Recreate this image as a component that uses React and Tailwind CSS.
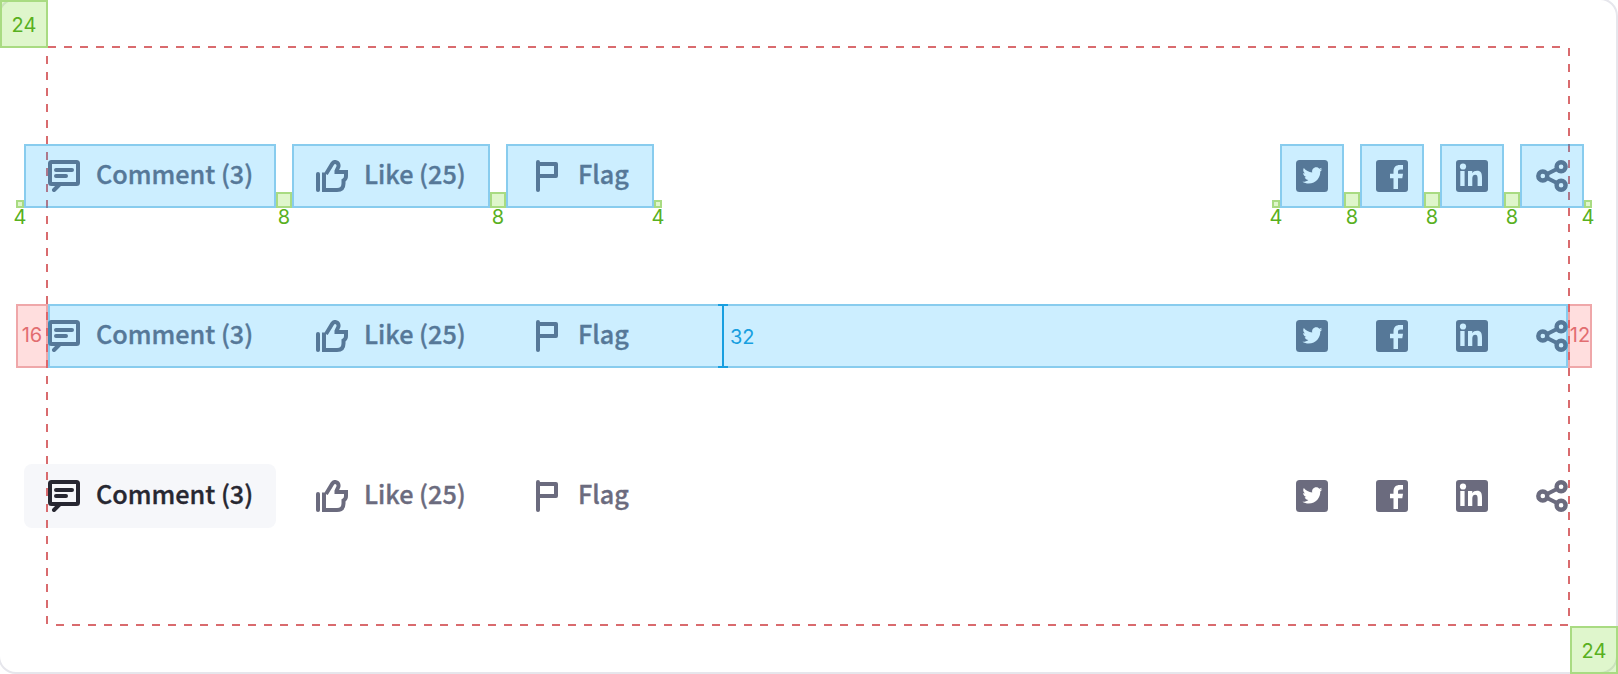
import React from "react";

const label = "self-start font-['Noto_Sans_CJK_JP','Noto_Sans',sans-serif] text-[25.2px] leading-[58px] font-medium whitespace-nowrap [-webkit-text-stroke:0.35px_currentColor]";

function CommentIcon() {
  return (
    <svg className="size-8 shrink-0" viewBox="0 0 32 32" fill="none" stroke="currentColor" strokeWidth="4" strokeLinecap="round" strokeLinejoin="round">
      <rect x="2" y="2" width="28" height="22" rx="1.5" />
      <path d="M8 10H24M8 16H18" />
      <path d="M11 25L6 30" />
    </svg>
  );
}

function LikeIcon() {
  return (
    <svg className="size-8 shrink-0" viewBox="0 0 32 32" fill="none" stroke="currentColor" strokeWidth="4" strokeLinecap="round" strokeLinejoin="round">
      <path d="M2 14V30" />
      <path strokeLinecap="butt" strokeLinejoin="miter" d="M8 12.5V30H21Q27.500 30 27.500 23.500V20.500Q30 19 30 16V12H20.500V11L22.500 6.500C23 2.200 18.500.500 16.300 3.700L10 14" />
    </svg>
  );
}

function FlagIcon() {
  return (
    <svg className="size-8 shrink-0" viewBox="0 0 32 32" fill="none" stroke="currentColor" strokeWidth="4" strokeLinecap="round" strokeLinejoin="round">
      <path d="M8 2V30M8 4H26V16H8" />
    </svg>
  );
}

function TwitterIcon() {
  return (
    <svg className="size-8 shrink-0" viewBox="0 0 32 32" fill="currentColor">
      <rect width="32" height="32" rx="3.500" />
      <path className="fill-white" transform="translate(6.400 5.500) scale(.83)" d="M24 4.557c-.883.392-1.832.656-2.828.775 1.017-.609 1.798-1.574 2.165-2.724-.951.564-2.005.974-3.127 1.195-.897-.957-2.178-1.555-3.594-1.555-3.179 0-5.515 2.966-4.797 6.045-4.091-.205-7.719-2.165-10.148-5.144-1.290 2.213-.669 5.108 1.523 6.574-.806-.026-1.566-.247-2.229-.616-.054 2.281 1.581 4.415 3.949 4.890-.693.188-1.452.232-2.224.084.626 1.956 2.444 3.379 4.600 3.419-2.070 1.623-4.678 2.348-7.290 2.040 2.179 1.397 4.768 2.212 7.548 2.212 9.142 0 14.307-7.721 13.995-14.646.962-.695 1.797-1.562 2.457-2.549z" />
    </svg>
  );
}

function FacebookIcon() {
  return (
    <svg className="size-8 shrink-0" viewBox="0 0 32 32" fill="currentColor">
      <rect width="32" height="32" rx="3" />
      <path className="fill-white" d="M17.500 29V18.300H14V13.800H17.500V11.500C17.500 7 20 5 23.800 5H27V9.500H24.500C23 9.500 22 10.200 22 11.800V13.800H27L26.300 18.300H22V29Z" />
    </svg>
  );
}

function LinkedinIcon() {
  return (
    <svg className="size-8 shrink-0" viewBox="0 0 32 32" fill="currentColor">
      <rect width="32" height="32" rx="3" />
      <g className="fill-white">
        <circle cx="7" cy="6.500" r="3.100" />
        <path d="M4.300 11H8.600V26H4.300ZM12 11H16.300V13.200C17.300 11.600 18.900 10.800 21 10.800C25 10.800 26 13.500 26 17.500V26H21.600V18.500C21.600 16.200 21.200 14.800 19.300 14.800C17.200 14.800 16.300 16.300 16.300 18.500V26H12Z" />
      </g>
    </svg>
  );
}

function ShareIcon() {
  return (
    <svg className="size-8 shrink-0" viewBox="0 0 32 32" fill="none" stroke="currentColor" strokeWidth="4.400">
      <circle cx="6.800" cy="16" r="4.500" />
      <circle cx="25.100" cy="6.800" r="4.500" />
      <circle cx="25.100" cy="25.200" r="4.500" />
      <path strokeWidth="4" d="M11 14L21 9M11 18L21 23" />
    </svg>
  );
}

function Highlight() {
  return <span className="absolute inset-0 z-20 border-2 border-[#2299d4]/40 bg-[#00aaff]/20" />;
}

function Gap({ size }) {
  const small = size === 4;
  return (
    <div className="relative z-20 flex h-16 shrink-0 items-end">
      <div className={small ? "size-2 border-2 border-[#a9db82] bg-[#dff6cb]" : "size-4 border-2 border-[#a9db82] bg-[#dff6cb]"} />
      <span className="absolute top-[61px] left-1/2 -translate-x-1/2 text-xl leading-6 text-[#58b020]">{size}</span>
    </div>
  );
}

function TextButton({ icon, children, width, marked, active }) {
  return (
    <div className={`relative flex h-16 shrink-0 items-center gap-4 rounded-lg pl-6 ${width} ${active ? "bg-[#f6f7fa] text-[#272731]" : ""}`}>
      {icon}
      <span className={label}>{children}</span>
      {marked && <Highlight />}
    </div>
  );
}

function IconButton({ children, marked }) {
  return (
    <div className="relative flex size-16 shrink-0 items-center justify-center">
      {children}
      {marked && <Highlight />}
    </div>
  );
}

function Between({ marked, size }) {
  if (marked) return <Gap size={size} />;
  return <div className={size === 4 ? "w-2 shrink-0" : "w-4 shrink-0"} />;
}

function ActionRow({ marked = false, active = false }) {
  return (
    <div className="flex h-16 justify-between pr-[26px] pl-4 text-[#6b6b7e]">
      <div className="flex">
        <Between marked={marked} size={4} />
        <TextButton icon={<CommentIcon />} width="w-[252px]" marked={marked} active={active}>Comment (3)</TextButton>
        <Between marked={marked} size={8} />
        <TextButton icon={<LikeIcon />} width="w-[198px]" marked={marked}>Like (25)</TextButton>
        <Between marked={marked} size={8} />
        <TextButton icon={<FlagIcon />} width="w-[148px]" marked={marked}>Flag</TextButton>
        <Between marked={marked} size={4} />
      </div>
      <div className="flex">
        <Between marked={marked} size={4} />
        <IconButton marked={marked}><TwitterIcon /></IconButton>
        <Between marked={marked} size={8} />
        <IconButton marked={marked}><FacebookIcon /></IconButton>
        <Between marked={marked} size={8} />
        <IconButton marked={marked}><LinkedinIcon /></IconButton>
        <Between marked={marked} size={8} />
        <IconButton marked={marked}><ShareIcon /></IconButton>
        <Between marked={marked} size={4} />
      </div>
    </div>
  );
}

export default function App() {
  return (
    <div className="relative flex h-[674px] w-[1618px] flex-col gap-24 overflow-hidden bg-white pt-36 font-['Inter',sans-serif]">
      <div className="pointer-events-none absolute -top-0.5 right-0 bottom-0 -left-0.5 rounded-[18px] border-2 border-[#e6e6ec]" />

      <div className="absolute top-[46px] left-12 z-10 h-0.5 w-[1520px] bg-[repeating-linear-gradient(90deg,#d96b6e_0_8px,transparent_8px_16px)]" />
      <div className="absolute top-12 left-[1568px] z-10 h-[576px] w-0.5 bg-[repeating-linear-gradient(180deg,#d96b6e_0_8px,transparent_8px_16px)]" />
      <div className="absolute top-[624px] left-12 z-10 h-0.5 w-[1520px] bg-[repeating-linear-gradient(90deg,transparent_0_8px,#d96b6e_8px_16px)]" />
      <div className="absolute top-12 left-[46px] z-10 h-[576px] w-0.5 bg-[repeating-linear-gradient(180deg,transparent_0_8px,#d96b6e_8px_16px)]" />

      <div className="absolute top-0 left-0 z-20 flex size-12 items-center justify-center border-2 border-[#a9db82] bg-[#5fd200]/20 pt-0.5 text-xl text-[#58b020]">24</div>
      <div className="absolute right-0 bottom-0 z-20 flex size-12 items-center justify-center border-2 border-[#a9db82] bg-[#5fd200]/20 pt-0.5 text-xl text-[#58b020]">24</div>

      <ActionRow marked />

      <div className="relative">
        <ActionRow />
        <div className="absolute top-0 left-12 z-20 h-16 w-[1520px] border-2 border-[#2299d4]/40 bg-[#00aaff]/20" />
        <div className="absolute top-0 left-4 z-20 flex h-16 w-8 items-center justify-center border-2 border-[#e07074]/50 bg-[#ff0000]/13 pb-0.5 text-xl text-[#e26d70]">16</div>
        <div className="absolute top-0 left-[1568px] z-20 flex h-16 w-6 items-center justify-center border-2 border-[#e07074]/50 bg-[#ff0000]/13 pb-0.5 text-xl text-[#e26d70]">12</div>
        <div className="absolute top-0 left-[718px] z-30 flex h-16 w-2.5 justify-center border-y-2 border-[#189fe0]">
          <span className="w-0.5 bg-[#189fe0]" />
        </div>
        <span className="absolute top-[21px] left-[730px] z-30 text-xl leading-6 text-[#189fe0]">32</span>
      </div>

      <ActionRow active />
    </div>
  );
}
